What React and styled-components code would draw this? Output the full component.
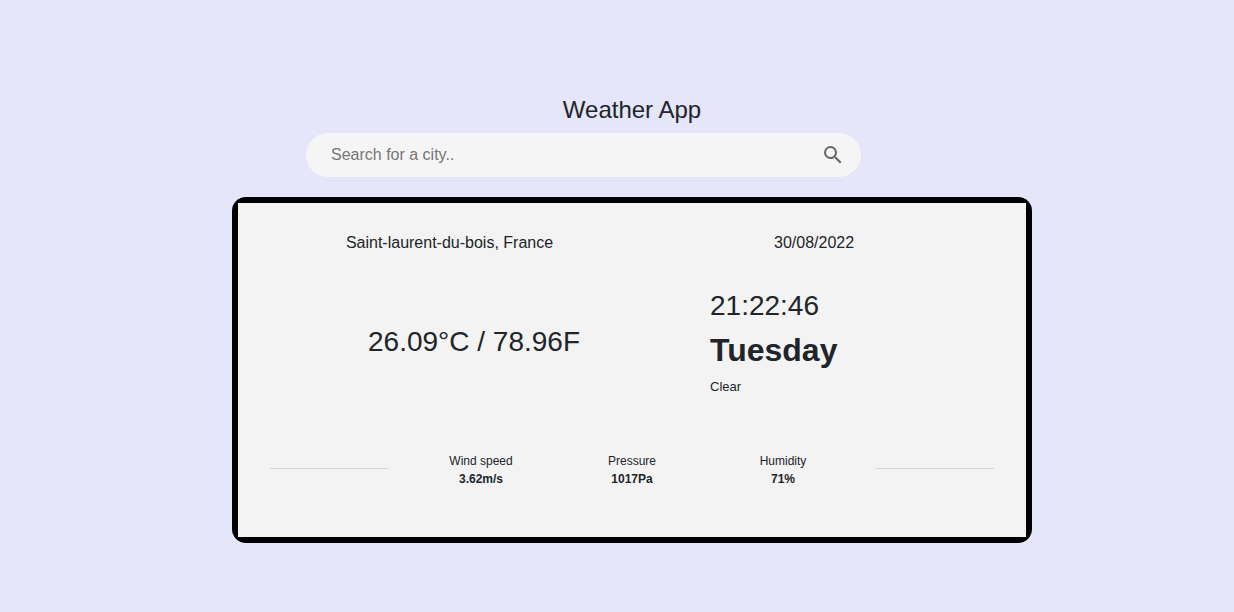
import React from "react";
import styled, { createGlobalStyle } from "styled-components";
import { MdSearch } from "react-icons/md";

const GlobalStyle = createGlobalStyle`
  *, *::before, *::after { box-sizing: border-box; }
  body {
    margin: 0;
    min-height: 100vh;
    background: #e6e6fa;
    color: #212529;
    font-family: "Liberation Sans", Arial, sans-serif;
    font-size: 16px;
    line-height: 24px;
  }
`;

const Shell = styled.div`
  padding-left: 30px;
`;

const Page = styled.main`
  display: flex;
  flex-direction: column;
  width: 100%;
  max-width: 800px;
  margin: 0 auto;
  padding: 95px 0 64px;
`;

const Title = styled.h1`
  margin: 0 0 8px;
  font-size: 24px;
  line-height: 30px;
  font-weight: 400;
  text-align: center;
`;

const SearchForm = styled.form`
  display: flex;
  align-items: center;
  width: 555px;
  max-width: 100%;
  height: 44px;
  margin: 0 0 20px 74px;
  padding: 0 16px 0 25px;
  border-radius: 22px;
  background: #f5f5f5;
`;

const SearchInput = styled.input`
  flex: 1;
  min-width: 0;
  padding: 0;
  border: 0;
  outline: 0;
  background: transparent;
  color: inherit;
  font: inherit;
  &::placeholder { color: #757575; }
`;

const SearchButton = styled.button`
  display: flex;
  padding: 0;
  border: 0;
  background: transparent;
  color: #666;
  font-size: 24px;
  cursor: pointer;
`;

const Frame = styled.section`
  padding: 6px;
  border-radius: 14px;
  background: #000;
`;

const Card = styled.div`
  padding: 28px 32px 49px;
  background: #f3f3f3;
`;

const Columns = styled.div`
  display: grid;
  grid-template-columns: 408px 1fr;
  align-items: center;
`;

const Place = styled.div`
  padding-right: 49px;
  text-align: center;
`;

const DateText = styled.time`
  padding-left: 96px;
`;

const Temperature = styled.div`
  padding-top: 32px;
  font-size: 28px;
  line-height: 34px;
  text-align: center;
`;

const Now = styled.div`
  display: flex;
  flex-direction: column;
  padding: 34px 0 0 32px;
`;

const Clock = styled.time`
  margin-bottom: 8px;
  font-size: 28px;
  line-height: 34px;
`;

const Day = styled.strong`
  margin-bottom: 8px;
  font-size: 32px;
  line-height: 38px;
`;

const Condition = styled.span`
  font-size: 13px;
  line-height: 20px;
`;

const Details = styled.div`
  display: grid;
  grid-template-columns: 118px 1fr 118px;
  align-items: start;
  margin-top: 55px;
`;

const Rule = styled.hr`
  width: 100%;
  margin: 16px 0 0;
  border: 0;
  border-top: 1px solid #d6d7d7;
`;

const Metrics = styled.dl`
  display: grid;
  grid-template-columns: repeat(3, 151px);
  justify-content: center;
  margin: 0;
  font-size: 12px;
  line-height: 18px;
  text-align: center;
`;

const Metric = styled.div``;
const Label = styled.dt``;
const Value = styled.dd`
  margin: 0;
  font-weight: 700;
`;

const metrics = [
  ["Wind speed", "3.62m/s"],
  ["Pressure", "1017Pa"],
  ["Humidity", "71%"],
];

export default function App() {
  return (
    <>
      <GlobalStyle />
      <Shell>
        <Page>
          <Title>Weather App</Title>
          <SearchForm role="search" onSubmit={(e) => e.preventDefault()}>
            <SearchInput type="text" aria-label="Search for a city" placeholder="Search for a city.." />
            <SearchButton type="submit" aria-label="Search"><MdSearch /></SearchButton>
          </SearchForm>
          <Frame>
            <Card>
              <Columns>
                <Place>Saint-laurent-du-bois, France</Place>
                <DateText>30/08/2022</DateText>
              </Columns>
              <Columns>
                <Temperature>26.09°C / 78.96F</Temperature>
                <Now>
                  <Clock>21:22:46</Clock>
                  <Day>Tuesday</Day>
                  <Condition>Clear</Condition>
                </Now>
              </Columns>
              <Details>
                <Rule />
                <Metrics>
                  {metrics.map(([label, value]) => (
                    <Metric key={label}>
                      <Label>{label}</Label>
                      <Value>{value}</Value>
                    </Metric>
                  ))}
                </Metrics>
                <Rule />
              </Details>
            </Card>
          </Frame>
        </Page>
      </Shell>
    </>
  );
}
